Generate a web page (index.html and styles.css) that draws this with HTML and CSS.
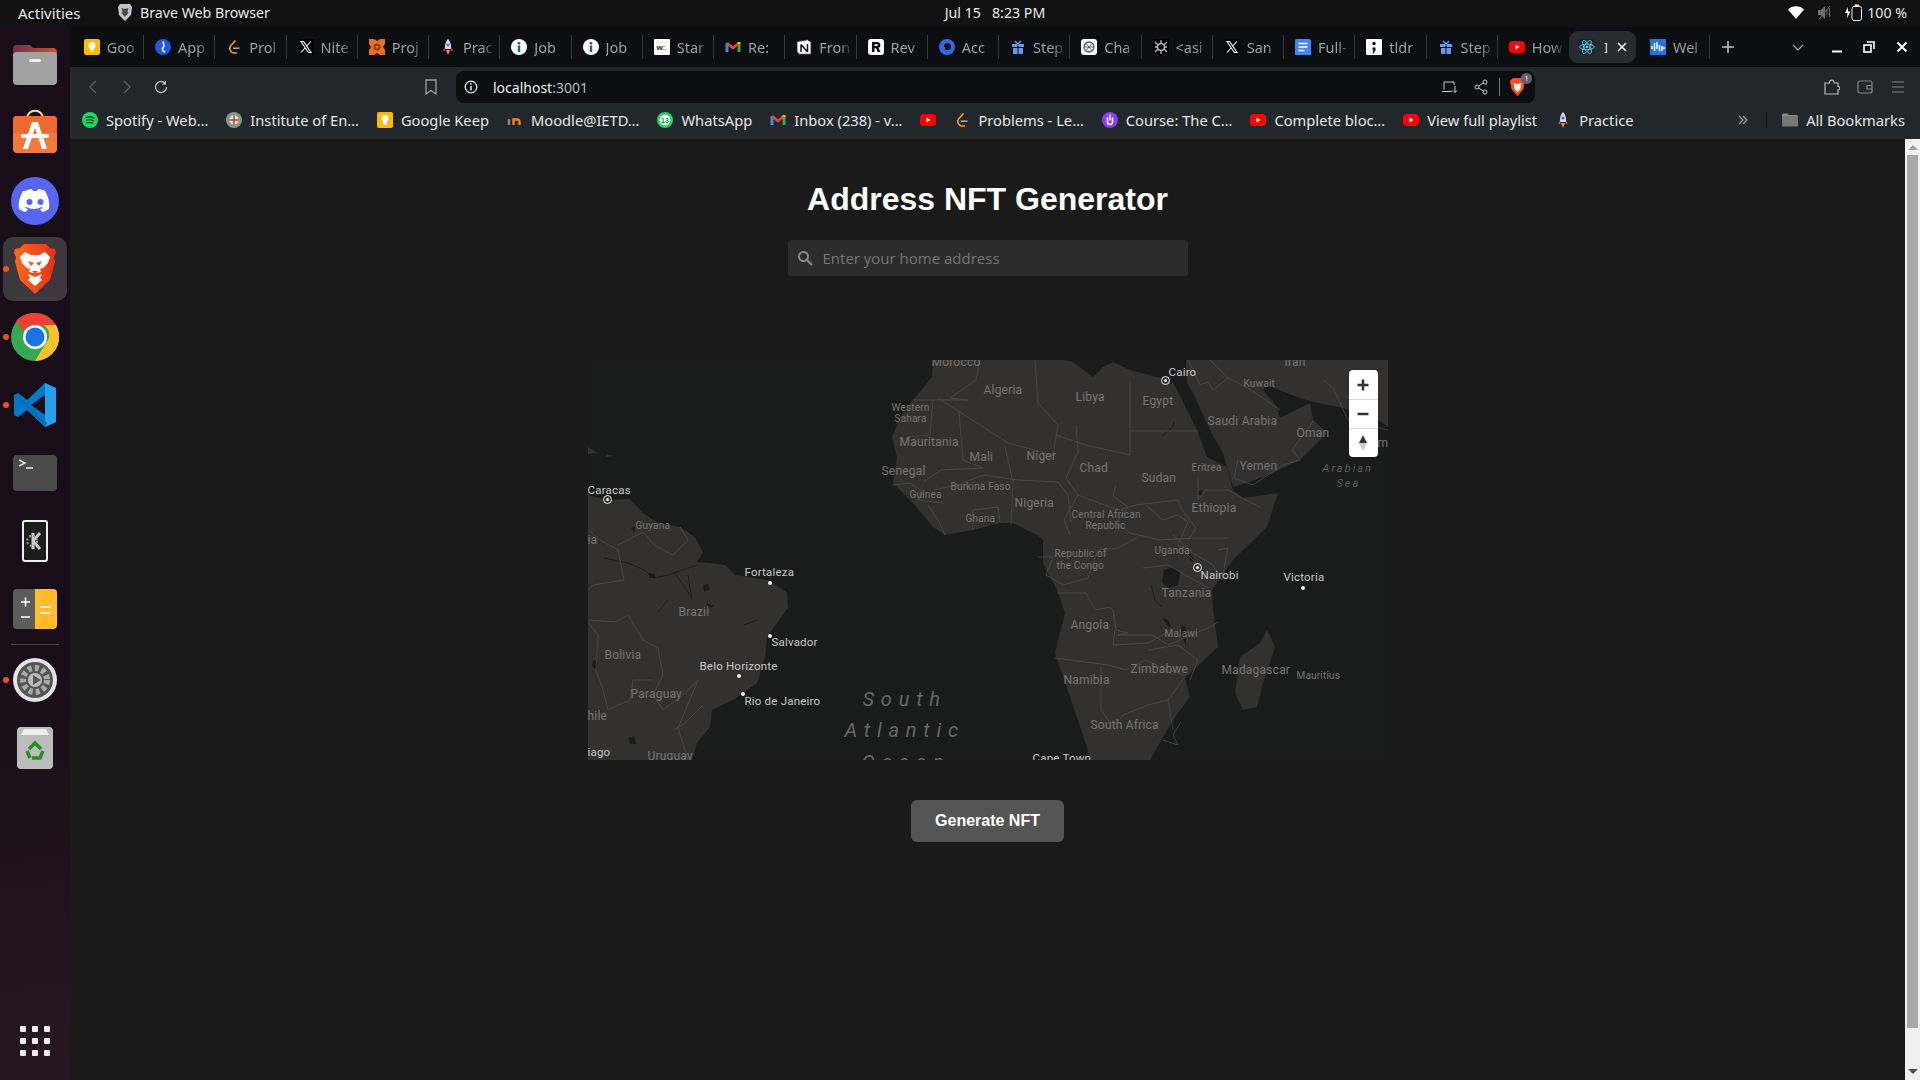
FILE: index.html
```html
<!DOCTYPE html>
<html lang="en">
<head>
  <meta charset="UTF-8">
  <title>Address NFT Generator</title>
  <link rel="stylesheet" href="styles.css">
</head>
<body>
  <!-- Favicons compartidos -->
  <svg class="sprites" width="0" height="0">
    <symbol id="i-keep" viewBox="0 0 16 16"><rect width="16" height="16" rx="2" fill="#fbbc04"/><circle cx="8" cy="6.500" r="3.500" fill="#fff"/><rect x="6" y="9" width="4" height="2" fill="#fff"/><rect x="6.500" y="11.500" width="3" height="1.500" fill="#fff"/></symbol>
    <symbol id="i-app" viewBox="0 0 16 16"><circle cx="8" cy="8" r="8" fill="#2456e6"/><path d="M8.500 2.500C7 4.500 10.500 6 8.500 8 6.500 9.500 7.500 12 10 13" fill="none" stroke="#fff" stroke-width="1.600"/></symbol>
    <symbol id="i-leet" viewBox="0 0 16 16"><path d="M9.500 1.500L4.500 7C3 9 4 13.500 7.500 14H11" fill="none" stroke="#f0a020" stroke-width="1.600"/><path d="M7 9.200h6.500" stroke="#b0b0b0" stroke-width="1.500"/><path d="M11 5.500L9.500 4" stroke="#222" stroke-width="1.500"/></symbol>
    <symbol id="i-x" viewBox="0 0 16 16"><rect width="16" height="16" fill="#000"/><path d="M3 2.500h2.600l7.400 11h-2.600zM12.800 2.500L8.800 7M7 9l-4 4.500" fill="none" stroke="#fff" stroke-width="1.100"/></symbol>
    <symbol id="i-proj" viewBox="0 0 16 16"><path d="M0 0h5l3 2 3-2h5v5l-2 3 2 3v5h-5l-3-2-3 2H0v-5l2-3-2-3z" fill="#ec6f1e"/><circle cx="8" cy="8" r="3.500" fill="#8c3d0c"/><circle cx="8" cy="8" r="1.500" fill="#ec6f1e"/></symbol>
    <symbol id="i-rocket" viewBox="0 0 16 16"><path d="M8 0c3 3 3 6 3 10H5c0-4 0-7 3-10z" fill="#d8dce2"/><circle cx="8" cy="6" r="1.500" fill="#3a6fd8"/><path d="M5 8l-2 4h2.500zM11 8l2 4h-2.500z" fill="#d8452a"/><path d="M6 11h4l-2 5z" fill="#f09020"/></symbol>
    <symbol id="i-info" viewBox="0 0 16 16"><circle cx="8" cy="8" r="8" fill="#fff"/><rect x="6.800" y="6.500" width="2.400" height="6.500" fill="#1758c4"/><circle cx="8" cy="4.300" r="1.400" fill="#1758c4"/></symbol>
    <symbol id="i-w" viewBox="0 0 16 16"><rect width="16" height="16" rx="1" fill="#fff"/><text x="2.500" y="10.500" font-family="Liberation Sans" font-size="8" font-weight="700" fill="#222">w<tspan fill="#d33">:</tspan></text></symbol>
    <symbol id="i-gmail" viewBox="0 0 16 16"><path d="M2 13V4" stroke="#4285f4" stroke-width="3"/><path d="M14 13V4" stroke="#34a853" stroke-width="3"/><path d="M2 4l6 5 6-5" fill="none" stroke="#ea4335" stroke-width="2.600"/><path d="M14 3v2" stroke="#fbbc04" stroke-width="3"/></symbol>
    <symbol id="i-notion" viewBox="0 0 16 16"><path d="M1 2.500L11.500.800 15 3v12.200H3.500L1 13z" fill="#fff" stroke="#222" stroke-width=".8"/><path d="M5 5.500v7.500M11.500 5v8M5 5.500l6.500 7.500" stroke="#111" stroke-width="1.500" fill="none"/></symbol>
    <symbol id="i-rev" viewBox="0 0 16 16"><rect width="16" height="16" rx="3" fill="#fff"/><path d="M4 3h5.500a3 3 0 0 1 1 5.800L12.500 13H9.700L8 9.200H6.500V13H4zM6.500 5.200V7h2.500a.9.9 0 0 0 0-1.800z" fill="#111"/></symbol>
    <symbol id="i-acc" viewBox="0 0 16 16"><circle cx="8" cy="8" r="8" fill="#3568e8"/><circle cx="8.500" cy="7.500" r="3.500" fill="#101418"/><path d="M3.500 13l2-5" stroke="#3568e8" stroke-width="2"/></symbol>
    <symbol id="i-gift" viewBox="0 0 16 16"><path d="M2 5h12v3H2zM3 9h10v6H3z" fill="#7196e4"/><path d="M8 5v10" stroke="#0c0e12"/><path d="M5 2l3 3 3-3" fill="none" stroke="#7196e4" stroke-width="1.500"/></symbol>
    <symbol id="i-chat" viewBox="0 0 16 16"><rect width="16" height="16" rx="3" fill="#fff"/><circle cx="8" cy="8" r="5" fill="none" stroke="#555" stroke-width="1.300"/><path d="M5 4.500l6 7M11 4.500l-6 7M3 8h10" stroke="#555" stroke-width=".9"/></symbol>
    <symbol id="i-asi" viewBox="0 0 16 16"><rect width="16" height="16" fill="#000"/><circle cx="8" cy="8" r="3.500" fill="none" stroke="#bbb" stroke-width="1.500"/><path d="M2 3l3 3M14 3l-3 3M2 13l3-3M14 13l-3-3M8 1v3M8 12v3M2 8h2M12 8h2" stroke="#bbb" stroke-width="1.300"/></symbol>
    <symbol id="i-docs" viewBox="0 0 16 16"><rect width="16" height="18" rx="2" fill="#4286f4"/><path d="M3.500 4.500h9M3.500 8h9M3.500 11.500h6" stroke="#fff" stroke-width="1.600"/></symbol>
    <symbol id="i-tldr" viewBox="0 0 16 16"><rect width="16" height="16" rx="1" fill="#fff"/><circle cx="8" cy="4.500" r="1.700" fill="#111"/><path d="M6.500 8.500h3v3l-2 3h-1l1-3h-1z" fill="#111"/></symbol>
    <symbol id="i-yt" viewBox="0 0 16 16"><rect y="2" width="16" height="12" rx="3.500" fill="#f00"/><path d="M6.500 5.500l4 2.500-4 2.500z" fill="#fff"/></symbol>
    <symbol id="i-web" viewBox="0 0 16 16"><rect width="16" height="16" fill="#1f74e8"/><path d="M2 7v3M4.500 4v8M7 3v7M9.500 6v6M12 7v5M14 8v2" stroke="#fff" stroke-width="1.500"/></symbol>
    <symbol id="i-spotify" viewBox="0 0 16 16"><circle cx="8" cy="8" r="8" fill="#1ed760"/><path d="M3.500 5.500c3-1 6-.7 9 .8M4 8.200c2.800-.8 5.500-.5 8 .7M4.500 10.800c2.300-.6 4.500-.3 6.500.6" fill="none" stroke="#123" stroke-width="1.200"/></symbol>
    <symbol id="i-iet" viewBox="0 0 16 16"><circle cx="8" cy="8" r="8" fill="#7f9b88"/><circle cx="8" cy="8" r="4.500" fill="#e8e8e0"/><path d="M8 3.500v9M3.500 8h9" stroke="#b04030" stroke-width="1.500"/></symbol>
    <symbol id="i-moodle" viewBox="0 0 16 16"><path d="M2 7v6" stroke="#888" stroke-width="2.400"/><path d="M6.500 13V7.500h3.500a2.500 2.500 0 0 1 2.500 2.500v3" fill="none" stroke="#f98012" stroke-width="2.400"/></symbol>
    <symbol id="i-wa" viewBox="0 0 16 16"><circle cx="8" cy="8" r="8" fill="#25d366"/><circle cx="8" cy="8" r="5.300" fill="#fff"/><text x="8" y="10.500" text-anchor="middle" font-family="Liberation Sans" font-size="7" font-weight="700" fill="#128c4a">13</text></symbol>
    <symbol id="i-course" viewBox="0 0 16 16"><circle cx="8" cy="8" r="8" fill="#8a3fe8"/><path d="M5.500 5.500v4.500a2.500 2.500 0 0 0 5 0V5.500" fill="none" stroke="#fff" stroke-width="1.600"/><path d="M8 2.500v6" stroke="#fff" stroke-width="1.300"/></symbol>
  </svg>

  <!-- Barra superior de escritorio -->
  <header class="topbar">
    <div class="topbar-left">
      <span class="activities">Activities</span>
      <span class="app-name">
        <svg width="14" height="17" viewBox="0 0 14 17"><path d="M2 0h10l2 3-1 8-6 6-6-6-1-8z" fill="#c4c4c4"/><path d="M3.500 4l3.500 1 3.500-1-1 4 1 1-3.500 4-3.500-4 1-1z" fill="#4a4a4a"/></svg>
        Brave Web Browser
      </span>
    </div>
    <div class="clock">Jul 15 &nbsp; 8:23 PM</div>
    <div class="status">
      <svg width="16" height="13" viewBox="0 0 16 13"><path d="M0 3.500a11.500 11.500 0 0 1 16 0L8 13z" fill="#fff"/></svg>
      <svg width="15" height="15" viewBox="0 0 15 15"><path d="M1 5h3l4-4v13l-4-4H1z" fill="#6f6f6f"/><path d="M10 4.500v6M12.500 3v9M2 14L13 1" stroke="#6f6f6f" fill="none"/></svg>
      <svg class="battery" width="17" height="17" viewBox="0 0 17 17"><path d="M3 3L0 9h2.500L2 14l3.500-6.500H3z" fill="#fff"/><rect x="7" y="2.500" width="9.500" height="14" rx="2" fill="#111" stroke="#eee"/><rect x="9.500" y="0.500" width="4.500" height="2" fill="#eee"/></svg>
      <span>100 %</span>
    </div>
  </header>

  <div class="desktop">
    <!-- Dock lateral -->
    <nav class="dock">
      <div class="dock-item">
        <svg width="44" height="42" viewBox="0 0 44 42"><defs><linearGradient id="folderTop" x1="0" x2="1"><stop offset="0" stop-color="#7a2a50"/><stop offset="1" stop-color="#c8552c"/></linearGradient></defs><path d="M0 5a4 4 0 0 1 4-4h13l3 3h20a4 4 0 0 1 4 4v12H0z" fill="url(#folderTop)"/><rect y="8" width="44" height="33" rx="4" fill="#a2a2a2"/><rect x="16" y="15" width="12" height="3" rx="1.500" fill="#eee"/></svg>
      </div>
      <div class="dock-item">
        <svg width="44" height="48" viewBox="0 0 44 48"><path d="M14 10c0-11 16-11 16 0" stroke="#eed9c0" stroke-width="2" fill="none"/><rect y="7" width="44" height="37" rx="4" fill="#ef7a3c"/><path d="M0 11a4 4 0 0 1 4-4h36a4 4 0 0 1 4 4v13H0z" fill="#ee6a2e"/><path d="M19 13h6l9 27h-5l-7-21-7 21h-5z" fill="#fff"/><rect x="8" y="25" width="28" height="4" rx="2" fill="#fff"/></svg>
      </div>
      <div class="dock-item">
        <svg width="48" height="48" viewBox="0 0 48 48"><circle cx="24" cy="24" r="24" fill="#5865f2"/><path d="M14 14c3-1.500 6-2 7-2l1 2h4l1-2c2 0 4 .5 7 2 3 5 5 11 4 18-3 2-6 3-7 3l-2-3 3-1-1-1c-6 2.500-10 2.500-16 0l-1 1 3 1-2 3c-2 0-4-1-7-3-1-7 1-13 4-18z" fill="#fff"/><circle cx="18.500" cy="25" r="3" fill="#5865f2"/><circle cx="29.500" cy="25" r="3" fill="#5865f2"/></svg>
      </div>
      <div class="dock-item dock-active running">
        <svg width="42" height="50" viewBox="0 0 42 50"><defs><linearGradient id="braveRed" x1="0" x2="1"><stop offset="0" stop-color="#ff6a1a"/><stop offset="1" stop-color="#e5301a"/></linearGradient></defs><path d="M10 0h22l4 4 5 1 1 4-2 4 1 5-5 18-10 9-5 5-5-5-10-9-5-18 1-5-2-4 1-4 5-1z" fill="url(#braveRed)"/><path d="M11 8l6 3h8l6-3 5 5-2 6-5 5-3 1 1 3-5 1h-2l-5-1 1-3-3-1-5-5-2-6z" fill="#fff"/><path d="M14 30l7 3 7-3-2 4 2 2-7 6-7-6 2-2z" fill="#fff"/><path d="M14 17l6 2-3 3zM28 17l-6 2 3 3z" fill="#f4511e"/><path d="M18 27h6l-3 3z" fill="#f4511e"/></svg>
      </div>
      <div class="dock-item running">
        <svg width="48" height="48" viewBox="0 0 48 48"><circle cx="24" cy="24" r="24" fill="#34a853"/><path d="M24 0a24 24 0 0 1 21 12H24a12 12 0 0 0-11 7L5 8A24 24 0 0 1 24 0z" fill="#ea4335"/><path d="M45 12a24 24 0 0 1-21 36l11-18a12 12 0 0 0-2-18z" fill="#fbc02d"/><circle cx="24" cy="24" r="12" fill="#fff"/><circle cx="24" cy="24" r="9.500" fill="#1a73e8"/></svg>
      </div>
      <div class="dock-item running">
        <svg width="44" height="44" viewBox="0 0 44 44"><path d="M32 0l11 5v34l-11 5-18-17-9 7-4-2V12l4-2 9 7z" fill="#0078c8"/><path d="M32 0l11 5v34l-11 5z" fill="#24a0ed"/><path d="M32 12L18 22l14 10z" fill="#1a1019"/><path d="M2 14l2-2 30 28-2 4z" fill="#0a6fb5"/></svg>
      </div>
      <div class="dock-item">
        <svg width="44" height="36" viewBox="0 0 44 36"><rect width="44" height="36" rx="4" fill="#4a4a4a"/><path d="M6 5l6 3-6 3" stroke="#eee" stroke-width="1.500" fill="none"/><path d="M13 13h7" stroke="#eee" stroke-width="1.500"/></svg>
      </div>
      <div class="dock-item">
        <svg width="26" height="42" viewBox="0 0 26 42"><rect x="1" y="1" width="24" height="40" rx="2" fill="#1c1c1c" stroke="#eee" stroke-width="2"/><path d="M11 13v16M11 21l7-8M11 21l7 8" stroke="#ccc" stroke-width="3" fill="none"/><circle cx="10" cy="21" r="5" fill="none" stroke="#999" stroke-width="2" stroke-dasharray="2 2"/></svg>
      </div>
      <div class="dock-item">
        <svg width="44" height="40" viewBox="0 0 44 40"><path d="M4 0h18v40H4a4 4 0 0 1-4-4V4a4 4 0 0 1 4-4z" fill="#5c5c5c"/><path d="M22 0h18a4 4 0 0 1 4 4v32a4 4 0 0 1-4 4H22z" fill="#fdbb2d"/><path d="M8 13h9M12.500 8.500v9M8 28h9" stroke="#fff" stroke-width="1.500"/><path d="M27 18h11M27 24h11" stroke="#fff" stroke-width="1.300"/></svg>
      </div>
      <div class="dock-sep"></div>
      <div class="dock-item running">
        <svg width="46" height="46" viewBox="0 0 46 46"><circle cx="23" cy="23" r="22" fill="#e4e4e4"/><circle cx="23" cy="23" r="18" fill="#555"/><circle cx="23" cy="23" r="12" fill="none" stroke="#aaa" stroke-width="6" stroke-dasharray="4 3"/><circle cx="23" cy="23" r="7" fill="#bbb"/><path d="M21 18l8 5-8 5z" fill="#555"/></svg>
      </div>
      <div class="dock-item">
        <svg width="36" height="42" viewBox="0 0 36 42"><rect width="36" height="42" rx="4" fill="#bcbcbc"/><path d="M4 8l3-6h22l3 6z" fill="#eee"/><path d="M12 22l6-6 6 6M26 24l-3 7h-8M10 24l3 7" stroke="#2a8a25" stroke-width="3.500" fill="none"/></svg>
      </div>
      <div class="dock-grid">
        <i></i><i></i><i></i><i></i><i></i><i></i><i></i><i></i><i></i>
      </div>
    </nav>

    <div class="browser">
      <!-- Pestañas -->
      <div class="tabs">
        <div class="tab"><svg class="favicon"><use href="#i-keep"/></svg><span class="tab-title">Goo</span></div>
        <div class="tab"><svg class="favicon"><use href="#i-app"/></svg><span class="tab-title">App</span></div>
        <div class="tab"><svg class="favicon"><use href="#i-leet"/></svg><span class="tab-title">Prol</span></div>
        <div class="tab"><svg class="favicon"><use href="#i-x"/></svg><span class="tab-title">Nite</span></div>
        <div class="tab"><svg class="favicon"><use href="#i-proj"/></svg><span class="tab-title">Proj</span></div>
        <div class="tab"><svg class="favicon"><use href="#i-rocket"/></svg><span class="tab-title">Prac</span></div>
        <div class="tab"><svg class="favicon"><use href="#i-info"/></svg><span class="tab-title">Job</span></div>
        <div class="tab"><svg class="favicon"><use href="#i-info"/></svg><span class="tab-title">Job</span></div>
        <div class="tab"><svg class="favicon"><use href="#i-w"/></svg><span class="tab-title">Star</span></div>
        <div class="tab"><svg class="favicon"><use href="#i-gmail"/></svg><span class="tab-title">Re: </span></div>
        <div class="tab"><svg class="favicon"><use href="#i-notion"/></svg><span class="tab-title">Fron</span></div>
        <div class="tab"><svg class="favicon"><use href="#i-rev"/></svg><span class="tab-title">Rev</span></div>
        <div class="tab"><svg class="favicon"><use href="#i-acc"/></svg><span class="tab-title">Acc</span></div>
        <div class="tab"><svg class="favicon"><use href="#i-gift"/></svg><span class="tab-title">Step</span></div>
        <div class="tab"><svg class="favicon"><use href="#i-chat"/></svg><span class="tab-title">Cha</span></div>
        <div class="tab"><svg class="favicon"><use href="#i-asi"/></svg><span class="tab-title">&lt;asi</span></div>
        <div class="tab"><svg class="favicon"><use href="#i-x"/></svg><span class="tab-title">San</span></div>
        <div class="tab"><svg class="favicon"><use href="#i-docs"/></svg><span class="tab-title">Full-</span></div>
        <div class="tab"><svg class="favicon"><use href="#i-tldr"/></svg><span class="tab-title">tldr</span></div>
        <div class="tab"><svg class="favicon"><use href="#i-gift"/></svg><span class="tab-title">Step</span></div>
        <div class="tab tab-before-active"><svg class="favicon"><use href="#i-yt"/></svg><span class="tab-title">How</span></div>
        <div class="tab-active">
          <svg class="react" width="16" height="16" viewBox="-12 -12 24 24"><g fill="none" stroke="#61dafb" stroke-width="1.300"><ellipse rx="11" ry="4.200"/><ellipse rx="11" ry="4.200" transform="rotate(60)"/><ellipse rx="11" ry="4.200" transform="rotate(120)"/></g><circle r="2" fill="#61dafb"/></svg>
          <span class="tab-title">I</span>
          <svg class="tab-close" width="10" height="10" viewBox="0 0 10 10"><path d="M1 1l8 8M9 1L1 9" stroke="#fff" stroke-width="1.500"/></svg>
        </div>
        <div class="tab tab-after-active"><svg class="favicon"><use href="#i-web"/></svg><span class="tab-title">Wel</span></div>
        <svg class="tab-new" width="14" height="14" viewBox="0 0 14 14"><path d="M7 1v12M1 7h12" stroke="#c0c4c8" stroke-width="1.500"/></svg>
        <div class="win-controls">
          <svg class="win-down" width="14" height="14" viewBox="0 0 14 14"><path d="M2 5l5 5 5-5" stroke="#aab" fill="none" stroke-width="1.200"/></svg>
          <svg class="win-min" width="12" height="12" viewBox="0 0 12 12"><path d="M1 10.500h10" stroke="#fff" stroke-width="2"/></svg>
          <svg class="win-max" width="12" height="12" viewBox="0 0 12 12"><rect x="1" y="4" width="7" height="7" fill="none" stroke="#fff" stroke-width="1.600"/><path d="M4 1h7v7" fill="none" stroke="#fff" stroke-width="1.600"/></svg>
          <svg class="win-close" width="12" height="12" viewBox="0 0 12 12"><path d="M1.500 1.500l9 9M10.500 1.500l-9 9" stroke="#fff" stroke-width="2"/></svg>
        </div>
      </div>

      <!-- Barra de direcciones -->
      <div class="toolbar">
        <svg class="nav-icon" width="16" height="16" viewBox="0 0 16 16"><path d="M11 2L5 8l6 6" stroke="#5a6066" fill="none" stroke-width="1.300"/></svg>
        <svg class="nav-icon" width="16" height="16" viewBox="0 0 16 16"><path d="M5 2l6 6-6 6" stroke="#5a6066" fill="none" stroke-width="1.300"/></svg>
        <svg class="nav-icon" width="16" height="16" viewBox="0 0 16 16"><path d="M13.500 8a5.500 5.500 0 1 1-2-4.200" stroke="#b8bcc0" fill="none" stroke-width="1.300"/><path d="M13 1.500v4.200H8.800z" fill="#b8bcc0"/></svg>
        <svg class="bookmark-icon" width="14" height="16" viewBox="0 0 14 16"><path d="M2 1h10v14l-5-3.500L2 15z" stroke="#9aa0a6" fill="none" stroke-width="1.300"/></svg>
        <div class="omnibox">
          <svg width="14" height="14" viewBox="0 0 14 14"><circle cx="7" cy="7" r="5.800" fill="none" stroke="#eee" stroke-width="1.300"/><path d="M7 6v4.500M7 3.300v1.400" stroke="#eee" stroke-width="1.500"/></svg>
          <span class="url">localhost<span class="url-port">:3001</span></span>
          <span class="omni-right">
            <svg class="omni-install" width="16" height="14" viewBox="0 0 16 14"><path d="M2 9.500V2h10v3M0 11.500h10" stroke="#c5c9cc" fill="none"/><path d="M13 6v6.500M11 10.500l2 2 2-2" stroke="#c5c9cc" fill="none"/></svg>
            <svg width="14" height="16" viewBox="0 0 14 16"><path d="M11 3L3 8l8 5" stroke="#c5c9cc" fill="none"/><circle cx="11" cy="3" r="2" fill="#0c0e12" stroke="#c5c9cc"/><circle cx="3" cy="8" r="2" fill="#0c0e12" stroke="#c5c9cc"/><circle cx="11" cy="13" r="2" fill="#0c0e12" stroke="#c5c9cc"/></svg>
            <i class="omni-sep"></i>
            <span class="shield">
              <svg width="15" height="18" viewBox="0 0 15 18"><path d="M3 0h9l3 3-1.500 8L7.500 18 1.500 11 0 3z" fill="#f4511e"/><path d="M3.500 5l4 1.200 4-1.200-1 4 .5 1-3.500 4-3.500-4 .5-1z" fill="#fff"/></svg>
              <b>1</b>
            </span>
          </span>
        </div>
        <svg class="tool-icon tool-first" width="16" height="16" viewBox="0 0 16 16"><path d="M1 4h4.500V3a2.300 2.300 0 0 1 4.500 0v1h4v3.500h.5a1.800 1.800 0 0 1 0 3.500H14v4H1z" fill="none" stroke="#b8bcc0" stroke-width="1.200"/></svg>
        <svg class="tool-icon" width="16" height="16" viewBox="0 0 16 16"><rect x="1" y="2" width="14" height="12" rx="2" fill="none" stroke="#7f868b" stroke-width="1.200"/><path d="M15 6.500H10v3.500h5" fill="none" stroke="#7f868b" stroke-width="1.200"/></svg>
        <svg class="tool-icon" width="16" height="16" viewBox="0 0 16 16"><path d="M2 3h12M2 8h12M2 13h12" stroke="#7f868b" stroke-width="1.200"/></svg>
      </div>

      <!-- Barra de marcadores -->
      <div class="bookmarks">
        <span class="bm"><svg class="favicon"><use href="#i-spotify"/></svg>Spotify - Web…</span>
        <span class="bm"><svg class="favicon"><use href="#i-iet"/></svg>Institute of En…</span>
        <span class="bm"><svg class="favicon"><use href="#i-keep"/></svg>Google Keep</span>
        <span class="bm"><svg class="favicon"><use href="#i-moodle"/></svg>Moodle@IETD…</span>
        <span class="bm"><svg class="favicon"><use href="#i-wa"/></svg>WhatsApp</span>
        <span class="bm"><svg class="favicon"><use href="#i-gmail"/></svg>Inbox (238) - v…</span>
        <span class="bm"><svg class="favicon"><use href="#i-yt"/></svg></span>
        <span class="bm"><svg class="favicon"><use href="#i-leet"/></svg>Problems - Le…</span>
        <span class="bm"><svg class="favicon"><use href="#i-course"/></svg>Course: The C…</span>
        <span class="bm"><svg class="favicon"><use href="#i-yt"/></svg>Complete bloc…</span>
        <span class="bm"><svg class="favicon"><use href="#i-yt"/></svg>View full playlist</span>
        <span class="bm"><svg class="favicon"><use href="#i-rocket"/></svg>Practice</span>
        <svg class="bm-more" width="10" height="10" viewBox="0 0 10 10"><path d="M1 1l4 4-4 4M5 1l4 4-4 4" stroke="#9aa0a4" fill="none" stroke-width="1.200"/></svg>
        <i class="bm-sep"></i>
        <span class="bm bm-all">
          <svg class="favicon" viewBox="0 0 16 16"><path d="M0 3a1.500 1.500 0 0 1 1.500-1.500h4L7 3h7.500A1.500 1.500 0 0 1 16 4.500V14H0z" fill="#8a8a8a"/><rect y="4" width="16" height="10.500" rx="1" fill="#777"/></svg>
          All Bookmarks
        </span>
      </div>

      <div class="viewport">
        <!-- Contenido de la pagina -->
        <main class="page">
          <h1 class="title">Address NFT Generator</h1>
          <div class="search">
            <svg width="16" height="16" viewBox="0 0 16 16"><circle cx="6.500" cy="6.500" r="4.500" fill="none" stroke="#8a8a8a" stroke-width="2"/><path d="M10 10l5 5" stroke="#8a8a8a" stroke-width="2.200"/></svg>
            <span>Enter your home address</span>
          </div>

          <div class="map">
            <svg class="map-land" width="800" height="400" viewBox="0 0 800 400">
              <!-- Tierra -->
              <g fill="#323130">
                <path d="M0 135 19 140 42 139 55 153 70 163 92 167 107 177 115 192 109 202 122 203 137 205 147 215 179 220 199 232 200 248 189 263 179 277 177 297 169 323 145 340 124 350 122 367 109 383 104 400H0Z"/>
                <path d="M0 87 10 93 0 94ZM18 94 26 96 18 97Z"/>
                <path d="M345 0 344 17 325 40 312 57 304 77 309 97 305 123 325 143 345 167 357 175 385 170 412 163 425 163 449 175 455 180 455 203 469 230 477 253 467 293 482 337 499 387 502 400H562L585 360 602 337 597 318 630 287 625 250 624 230 645 200 679 167 690 133 655 138 645 131 639 107 619 97 609 70 589 30 585 23 572 18 542 10 525 2 515 7 505 17 485 2 475 0Z"/>
                <path d="M599 23 605 33 622 70 635 93 645 127 659 123 685 113 712 100 725 87 739 73 725 60 722 43 714 47 692 58 689 47 675 30 679 25 709 37 725 42 755 48 788 58 800 67V0H598Z"/>
                <path d="M679 270 687 287 675 323 669 347 655 350 647 333 652 297 672 283Z"/>
              </g>
              <!-- Lagos y rios -->
              <g fill="#1a1b1b">
                <path d="M576 210 585 207 592 212 590 225 580 228 574 222Z"/>
                <path d="M610 131 614 130 614 135 610 135Z"/>
                <path d="M600 192 604 195 606 202 602 200Z"/>
                <path d="M574 258 580 260 584 268 580 266Z"/>
                <path d="M594 265 598 268 598 285 592 275Z"/>
                <path d="M119 243 126 246 118 250Z"/>
                <path d="M43 168 47 167 46 172Z"/>
                <path d="M60 213 66 214 68 218 62 218Z"/>
                <path d="M115 225 120 224 122 230 116 231Z"/>
                <path d="M40 378 46 376 48 384 42 384Z"/>
                <path d="M5 300 10 302 8 310 4 306Z"/>
              </g>
              <g fill="none" stroke="#1a1b1b" stroke-width=".9">
                <path d="M16 198 40 203 56 210 66 218 80 215 94 210 110 205M86 212 102 235M100 215 104 240M80 240 70 252"/>
                <path d="M563 225 567 240 574 247"/>
                <path d="M574 76 584 68 586 62"/>
                <path d="M392 155 408 168"/>
                <path d="M156 265 170 260"/>
              </g>
              <!-- Fronteras -->
              <g fill="none" stroke="#4e4d4c" stroke-width=".8">
                <path d="M345 40 380 40 362 38 388 20 392 0"/>
                <path d="M350 38 420 83 465 95 470 65 450 43 447 0"/>
                <path d="M325 40 345 40 342 75 319 77"/>
                <path d="M371 52 375 100 395 108 353 110 335 122"/>
                <path d="M345 130 370 125 395 115 430 120 470 122 480 135 483 162"/>
                <path d="M417 87 425 122 423 165"/>
                <path d="M488 65 490 92 478 118 490 135 476 160 482 175"/>
                <path d="M468 75 498 85 542 95 542 21"/>
                <path d="M542 71 610 71"/>
                <path d="M528 125 525 136 540 147 528 163 542 173 572 180 606 178 640 178"/>
                <path d="M490 135 530 150 548 145 590 140 594 150 608 168 600 180"/>
                <path d="M558 145 575 160 590 155 600 162 590 185 610 205"/>
                <path d="M610 117 610 140 618 130 640 130 658 140 672 147"/>
                <path d="M585 175 605 193 625 205 634 220 640 188 630 190"/>
                <path d="M555 208 580 205 620 228"/>
                <path d="M450 197 465 197 458 215 475 225 500 218 510 190 530 188 548 178"/>
                <path d="M469 233 498 233 507 250 522 247 525 250 528 270 540 273 530 275 565 275 580 285 620 268 630 262"/>
                <path d="M527 270 525 285 560 283 580 272"/>
                <path d="M467 298 520 305 538 310 557 300 580 310 596 315"/>
                <path d="M513 305 513 350 525 367 535 355 560 345 580 340 585 370"/>
                <path d="M560 290 590 285 610 300 602 320"/>
                <path d="M580 340 596 318"/>
                <path d="M593 362 585 375 590 385 575 380"/>
                <path d="M622 0 640 18 660 28 692 50"/>
                <path d="M600 0 612 25 620 22 625 30 640 18"/>
                <path d="M650 100 646 118 665 125 695 105 712 100 704 90 726 60"/>
                <path d="M0 170 12 180 30 190 36 220 5 225 0 230"/>
                <path d="M30 185 55 172 66 185 85 195 100 180 92 167"/>
                <path d="M0 260 28 262 40 255 55 280 70 288 75 315 65 335 75 350 95 335 110 320 90 368 100 400"/>
                <path d="M0 262 10 275 8 310 15 330 20 350 30 345 42 340 45 320 65 320"/>
                <path d="M85 370 95 365 115 345"/>
                <path d="M305 125 322 123 335 132 330 140 355 143M340 145 350 160 357 175M385 170 385 150 410 147 412 162"/>
                <path d="M735 20 745 28 760 60 800 70"/>
              </g>
            </svg>

            <!-- Etiquetas del mapa -->
            <span class="place city" style="left:0;top:123px">Caracas</span>
            <span class="place city" style="left:157px;top:205px">Fortaleza</span>
            <span class="place city" style="left:184px;top:275px">Salvador</span>
            <span class="place city" style="left:112px;top:299px">Belo Horizonte</span>
            <span class="place city" style="left:157px;top:334px">Rio de Janeiro</span>
            <span class="place city" style="left:0;top:385px">iago</span>
            <span class="place city" style="left:581px;top:5px">Cairo</span>
            <span class="place city" style="left:613px;top:208px">Nairobi</span>
            <span class="place city" style="left:696px;top:210px">Victoria</span>
            <span class="place city" style="left:445px;top:391px">Cape Town</span>

            <span class="place" style="left:344px;top:-5px">Morocco</span>
            <span class="place small" style="left:304px;top:42px">Western</span>
            <span class="place small" style="left:307px;top:53px">Sahara</span>
            <span class="place" style="left:312px;top:75px">Mauritania</span>
            <span class="place" style="left:382px;top:90px">Mali</span>
            <span class="place" style="left:294px;top:104px">Senegal</span>
            <span class="place small" style="left:363px;top:121px">Burkina Faso</span>
            <span class="place small" style="left:322px;top:129px">Guinea</span>
            <span class="place small" style="left:378px;top:153px">Ghana</span>
            <span class="place small" style="left:48px;top:160px">Guyana</span>
            <span class="place" style="left:91px;top:245px">Brazil</span>
            <span class="place" style="left:17px;top:288px">Bolivia</span>
            <span class="place" style="left:43px;top:327px">Paraguay</span>
            <span class="place" style="left:0;top:349px">hile</span>
            <span class="place" style="left:60px;top:389px">Uruguay</span>
            <span class="place" style="left:0;top:173px">ia</span>
            <span class="place" style="left:396px;top:23px">Algeria</span>
            <span class="place" style="left:488px;top:30px">Libya</span>
            <span class="place" style="left:555px;top:34px">Egypt</span>
            <span class="place" style="left:620px;top:54px">Saudi Arabia</span>
            <span class="place" style="left:709px;top:66px">Oman</span>
            <span class="place small" style="left:656px;top:18px">Kuwait</span>
            <span class="place" style="left:697px;top:-5px">Iran</span>
            <span class="place" style="left:439px;top:89px">Niger</span>
            <span class="place" style="left:492px;top:101px">Chad</span>
            <span class="place" style="left:554px;top:111px">Sudan</span>
            <span class="place small" style="left:604px;top:102px">Eritrea</span>
            <span class="place" style="left:652px;top:99px">Yemen</span>
            <span class="place" style="left:427px;top:136px">Nigeria</span>
            <span class="place" style="left:604px;top:141px">Ethiopia</span>
            <span class="place small" style="left:484px;top:149px">Central African</span>
            <span class="place small" style="left:498px;top:160px">Republic</span>
            <span class="place small" style="left:467px;top:188px">Republic of</span>
            <span class="place small" style="left:469px;top:200px">the Congo</span>
            <span class="place small" style="left:567px;top:185px">Uganda</span>
            <span class="place" style="left:574px;top:226px">Tanzania</span>
            <span class="place" style="left:483px;top:258px">Angola</span>
            <span class="place small" style="left:577px;top:268px">Malawi</span>
            <span class="place" style="left:543px;top:302px">Zimbabwe</span>
            <span class="place" style="left:476px;top:313px">Namibia</span>
            <span class="place" style="left:634px;top:303px">Madagascar</span>
            <span class="place small" style="left:709px;top:310px">Mauritius</span>
            <span class="place" style="left:503px;top:358px">South Africa</span>
            <span class="place" style="left:790px;top:76px">mt</span>

            <span class="sea sea-big" style="left:275px;top:327px">South</span>
            <span class="sea sea-big" style="left:257px;top:358px">Atlantic</span>
            <span class="sea sea-big" style="left:274px;top:390px">Ocean</span>
            <span class="sea" style="left:735px;top:102px">Arabian</span>
            <span class="sea" style="left:749px;top:117px">Sea</span>

            <i class="dot" style="left:180px;top:221px"></i>
            <i class="dot" style="left:180px;top:274px"></i>
            <i class="dot" style="left:149px;top:314px"></i>
            <i class="dot" style="left:153px;top:332px"></i>
            <i class="dot" style="left:713px;top:226px"></i>
            <i class="ring" style="left:16px;top:136px"></i>
            <i class="ring" style="left:574px;top:17px"></i>
            <i class="ring" style="left:606px;top:204px"></i>

            <div class="map-ctrl">
              <button class="ctrl-btn">
                <svg width="14" height="14" viewBox="0 0 14 14"><path d="M7 1.500v11M1.500 7h11" stroke="#333" stroke-width="2.500"/></svg>
              </button>
              <button class="ctrl-btn">
                <svg width="14" height="14" viewBox="0 0 14 14"><path d="M1.500 7h11" stroke="#333" stroke-width="2.500"/></svg>
              </button>
              <button class="ctrl-btn">
                <svg width="10" height="18" viewBox="0 0 10 18"><path d="M5 1l4 8H1z" fill="#333"/><path d="M5 17l4-8H1z" fill="#ccc"/></svg>
              </button>
            </div>
          </div>

          <button class="generate">Generate NFT</button>
        </main>

        <div class="scrollbar">
          <i class="scroll-up"></i>
          <div class="scroll-thumb"></div>
          <i class="scroll-down"></i>
        </div>
      </div>
    </div>
  </div>
</body>
</html>
```

FILE: styles.css
```css
* {
  box-sizing: border-box;
}

html, body {
  margin: 0;
  height: 1080px;
  overflow: hidden;
}

body {
  display: flex;
  flex-direction: column;
  background-color: #1a1a1a;
  font-family: "Noto Sans", sans-serif;
  color: #fff;
}

.sprites {
  position: absolute;
}

/* Barra superior */
.topbar {
  height: 27px;
  flex: none;
  display: grid;
  grid-template-columns: 1fr auto 1fr;
  align-items: center;
  padding-bottom: 2px;
  background-color: #111111;
  font-size: 14.200px;
  color: #e8e8e8;
}

.topbar-left {
  display: flex;
  align-items: center;
  padding-left: 18px;
}

.activities {
  width: 100px;
  font-size: 15px;
}

.app-name {
  display: flex;
  align-items: center;
  gap: 8px;
}

.clock {
  padding-left: 70px;
}

.status {
  display: flex;
  align-items: center;
  justify-content: flex-end;
  gap: 13px;
  padding-right: 13px;
}

.battery {
  margin-right: -8px;
}

/* Dock */
.desktop {
  flex: 1;
  display: flex;
  min-height: 0;
}

.dock {
  width: 70px;
  flex: none;
  display: flex;
  flex-direction: column;
  align-items: center;
  padding-top: 4px;
  background: linear-gradient(170deg, #180d18 60%, #261723);
  position: relative;
}

.dock-item {
  width: 64px;
  height: 68px;
  flex: none;
  display: flex;
  align-items: center;
  justify-content: center;
  position: relative;
}

.dock-active {
  height: 64px;
  margin: 2px 0;
  background-color: #3d383d;
  border-radius: 10px;
}

.running::before {
  content: "";
  position: absolute;
  left: 0;
  top: 50%;
  width: 6px;
  height: 6px;
  margin-top: -3px;
  border-radius: 50%;
  background-color: #e95420;
}

.dock-sep {
  width: 48px;
  height: 1px;
  flex: none;
  background-color: #4a444a;
  margin: 1px 0;
}

.dock-grid {
  position: absolute;
  left: 20px;
  top: 999px;
  width: 30px;
  display: grid;
  grid-template-columns: repeat(3, 6px);
  grid-auto-rows: 6px;
  gap: 6px;
}

.dock-grid i {
  background-color: #eeeeee;
  border-radius: 1px;
}

/* Navegador */
.browser {
  flex: 1;
  min-width: 0;
  display: flex;
  flex-direction: column;
}

.tabs {
  height: 40px;
  flex: none;
  display: flex;
  align-items: center;
  padding-left: 2.750px;
  background-color: #0c0e12;
}

.tab {
  width: 71.250px;
  height: 24px;
  flex: none;
  display: flex;
  align-items: center;
  gap: 7px;
  padding: 0 3px 0 11px;
  border-right: 1px solid #33383c;
}

.tab-before-active {
  border-right-color: transparent;
}

.tab-after-active {
  margin-left: 3px;
}

.tab-title {
  flex: 1;
  min-width: 0;
  font-size: 14.500px;
  color: #9aa0a4;
  white-space: nowrap;
  -webkit-mask-image: linear-gradient(90deg, #000 60%, transparent 100%);
}

.tab-active {
  width: 67px;
  height: 32px;
  flex: none;
  display: flex;
  align-items: center;
  gap: 9px;
  padding: 0 9px 0 10px;
  background-color: #262b2f;
  border-radius: 9px;
}

.tab-active .tab-title {
  color: #ddd;
}

.tab-close {
  flex: none;
}

.react {
  flex: none;
  background-color: #20232a;
  border-radius: 2px;
}

.tab-new {
  margin-left: 11px;
  flex: none;
}

.win-controls {
  margin-left: auto;
  display: flex;
  align-items: center;
  padding-right: 12px;
}

.win-min {
  margin-left: 26px;
}

.win-max {
  margin-left: 20px;
}

.win-close {
  margin-left: 21px;
}

.favicon {
  width: 16px;
  height: 16px;
  flex: none;
}

/* Barra de direcciones */
.toolbar {
  height: 40px;
  flex: none;
  display: flex;
  align-items: center;
  background-color: #22272b;
  padding-left: 15px;
}

.nav-icon {
  margin-right: 17px;
}

.nav-icon + .nav-icon {
  margin-left: 1px;
}

.bookmark-icon {
  margin-left: 238px;
  margin-right: 18px;
}

.omnibox {
  width: 1079px;
  height: 32px;
  display: flex;
  align-items: center;
  gap: 15px;
  padding: 0 10px 0 8px;
  background-color: #0c0e12;
  border-radius: 8px;
  font-size: 14px;
}

.url {
  color: #eef0f2;
}

.url-port {
  color: #b8bcc0;
}

.omni-right {
  margin-left: auto;
  display: flex;
  align-items: center;
  gap: 12px;
}

.omni-install {
  margin-right: 4px;
}

.omni-sep {
  width: 1px;
  height: 18px;
  background-color: #777;
  margin: 0 -2px 0 -1px;
}

.shield {
  position: relative;
  display: flex;
}

.shield b {
  position: absolute;
  top: -5px;
  right: -7px;
  width: 11px;
  height: 11px;
  border-radius: 50%;
  background-color: #5f6368;
  font-size: 7px;
  font-weight: 400;
  line-height: 11px;
  text-align: center;
}

.tool-icon {
  margin-left: 17px;
}

.tool-first {
  margin-left: 289px;
}

/* Marcadores */
.bookmarks {
  height: 32px;
  flex: none;
  display: flex;
  align-items: center;
  gap: 18px;
  background-color: #22272b;
  padding: 0 15px 6px 12px;
  font-size: 14.700px;
  color: #e6e8ea;
  white-space: nowrap;
}

.bm {
  display: inline-flex;
  align-items: center;
  gap: 8px;
}

.bm-more {
  margin-left: auto;
}

.bm-sep {
  width: 1px;
  height: 16px;
  background-color: #0c0e12;
  margin-right: -3px;
}

/* Contenido */
.viewport {
  flex: 1;
  min-height: 0;
  display: flex;
}

.page {
  flex: 1;
  display: flex;
  flex-direction: column;
  align-items: center;
  padding-top: 42px;
  background-color: #1a1a1a;
}

.title {
  margin: 0;
  font-family: "Liberation Sans", Arial, sans-serif;
  font-size: 32px;
  line-height: 37px;
  font-weight: 700;
  color: #ffffff;
}

.search {
  width: 400px;
  height: 36px;
  flex: none;
  margin-top: 22px;
  display: flex;
  align-items: center;
  gap: 10px;
  padding-left: 9px;
  background-color: #2c2c2c;
  border-radius: 3px;
  font-family: "Open Sans", sans-serif;
  font-size: 15px;
  color: #757575;
}

.map {
  width: 800px;
  height: 400px;
  flex: none;
  margin-top: 84px;
  position: relative;
  overflow: hidden;
  background-color: #1a1b1b;
  font-family: Roboto, sans-serif;
}

.map-land {
  display: block;
}

.place {
  position: absolute;
  font-size: 12px;
  line-height: 14px;
  letter-spacing: .2px;
  color: #787674;
  white-space: nowrap;
}

.place.small {
  font-size: 10px;
  line-height: 12px;
}

.place.city {
  font-size: 11.500px;
  color: #c8c8c6;
}

.sea {
  position: absolute;
  font-size: 11px;
  font-style: italic;
  letter-spacing: 2px;
  line-height: 14px;
  color: #5d5d5c;
}

.sea-big {
  font-size: 20px;
  line-height: 24px;
  letter-spacing: 6.800px;
  color: #676766;
}

.dot {
  position: absolute;
  width: 4px;
  height: 4px;
  border-radius: 50%;
  background-color: #eee;
}

.ring {
  position: absolute;
  width: 7px;
  height: 7px;
  border-radius: 50%;
  background-color: #eee;
  border: 2px solid #333;
  outline: 1px solid #eee;
}

.map-ctrl {
  position: absolute;
  right: 10px;
  top: 10px;
  width: 29px;
  display: flex;
  flex-direction: column;
  background-color: #fff;
  border-radius: 4px;
}

.ctrl-btn {
  height: 29px;
  padding: 0;
  display: flex;
  align-items: center;
  justify-content: center;
  background: none;
  border: none;
  border-top: 1px solid #ddd;
}

.ctrl-btn:first-child {
  border-top: none;
}

.generate {
  width: 153px;
  height: 42px;
  flex: none;
  margin-top: 40px;
  background-color: #555555;
  border: none;
  border-radius: 6px;
  font-family: "Liberation Sans", Arial, sans-serif;
  font-size: 16px;
  font-weight: 700;
  color: #ffffff;
}

/* Barra de desplazamiento */
.scrollbar {
  width: 15px;
  flex: none;
  display: flex;
  flex-direction: column;
  align-items: center;
  padding: 6px 2px;
  background-color: #f1f1f1;
}

.scroll-up {
  width: 0;
  height: 0;
  flex: none;
  border-left: 5px solid transparent;
  border-right: 5px solid transparent;
  border-bottom: 5px solid #a3a3a3;
  margin-bottom: 5px;
}

.scroll-thumb {
  width: 100%;
  height: 873px;
  flex: none;
  background-color: #a8a8a8;
}

.scroll-down {
  width: 0;
  height: 0;
  flex: none;
  margin-top: auto;
  border-left: 5px solid transparent;
  border-right: 5px solid transparent;
  border-top: 5px solid #505050;
}
```
